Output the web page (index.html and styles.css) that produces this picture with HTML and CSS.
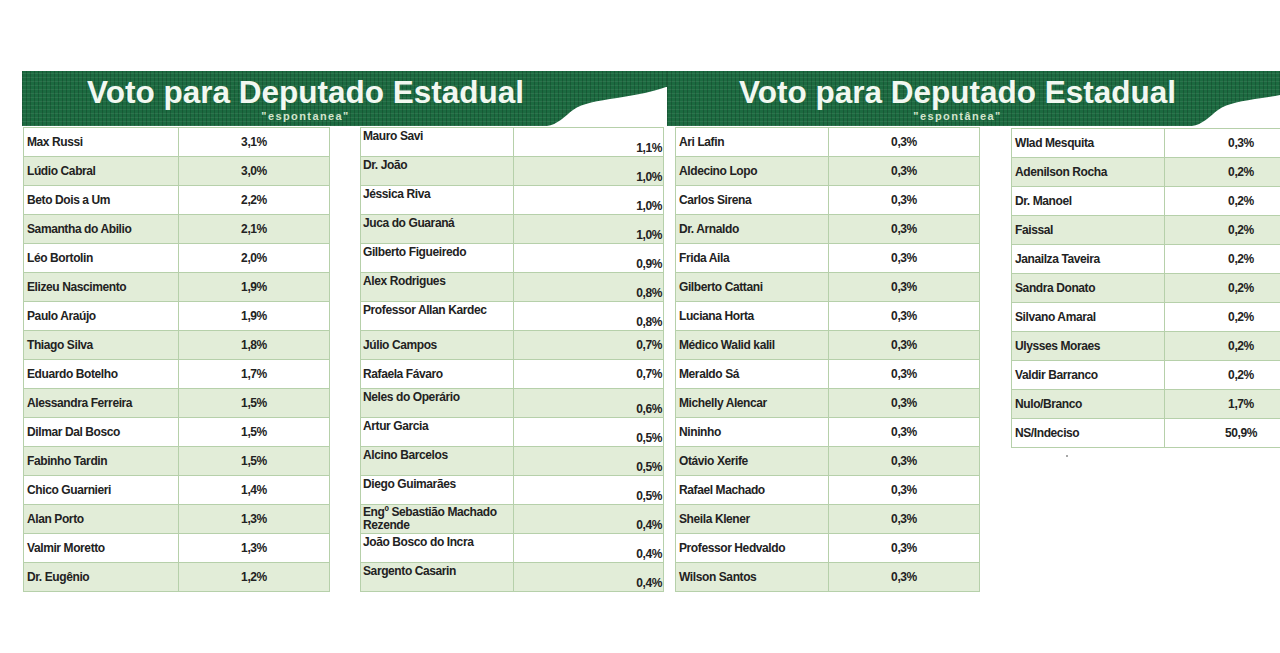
FILE: index.html
```html
<!DOCTYPE html>
<html lang="pt-BR">
<head>
<meta charset="utf-8">
<title>Voto para Deputado Estadual</title>
<link rel="stylesheet" href="styles.css">
</head>
<body>
<div class="page">
  <div class="banners">
    <div class="banner b1">
      <div class="title-block">
        <h1 class="title">Voto para Deputado Estadual</h1>
        <p class="sub">"espontanea"</p>
      </div>
      <svg class="cut" viewBox="0 0 120 40" preserveAspectRatio="none"><path d="M0 40 C10 39 18 30 26 24 C36 17 50 15 70 12 C90 9 108 5 119 1 L120 1 L120 40 Z" fill="#fff"/></svg>
    </div>
    <div class="banner b2">
      <div class="title-block">
        <h1 class="title">Voto para Deputado Estadual</h1>
        <p class="sub">"espontânea"</p>
      </div>
      <svg class="cut" viewBox="0 0 120 40" preserveAspectRatio="none"><path d="M0 40 C10 39 18 30 26 24 C36 17 50 15 70 12 C90 9 108 5 119 1 L120 1 L120 40 Z" fill="#fff"/></svg>
    </div>
  </div>

  <div class="tables">
    <table class="t t1">
      <colgroup><col class="c-name"><col></colgroup>
      <tr><td class="n">Max Russi</td><td class="v">3,1%</td></tr>
      <tr><td class="n">Lúdio Cabral</td><td class="v">3,0%</td></tr>
      <tr><td class="n">Beto Dois a Um</td><td class="v">2,2%</td></tr>
      <tr><td class="n">Samantha do Abilio</td><td class="v">2,1%</td></tr>
      <tr><td class="n">Léo Bortolin</td><td class="v">2,0%</td></tr>
      <tr><td class="n">Elizeu Nascimento</td><td class="v">1,9%</td></tr>
      <tr><td class="n">Paulo Araújo</td><td class="v">1,9%</td></tr>
      <tr><td class="n">Thiago Silva</td><td class="v">1,8%</td></tr>
      <tr><td class="n">Eduardo Botelho</td><td class="v">1,7%</td></tr>
      <tr><td class="n">Alessandra Ferreira</td><td class="v">1,5%</td></tr>
      <tr><td class="n">Dilmar Dal Bosco</td><td class="v">1,5%</td></tr>
      <tr><td class="n">Fabinho Tardin</td><td class="v">1,5%</td></tr>
      <tr><td class="n">Chico Guarnieri</td><td class="v">1,4%</td></tr>
      <tr><td class="n">Alan Porto</td><td class="v">1,3%</td></tr>
      <tr><td class="n">Valmir Moretto</td><td class="v">1,3%</td></tr>
      <tr><td class="n">Dr. Eugênio</td><td class="v">1,2%</td></tr>
    </table>

    <table class="t t2">
      <colgroup><col class="c-name"><col></colgroup>
      <tr><td class="n">Mauro Savi</td><td class="v">1,1%</td></tr>
      <tr><td class="n">Dr. João</td><td class="v">1,0%</td></tr>
      <tr><td class="n">Jéssica Riva</td><td class="v">1,0%</td></tr>
      <tr><td class="n">Juca do Guaraná</td><td class="v">1,0%</td></tr>
      <tr><td class="n">Gilberto Figueiredo</td><td class="v">0,9%</td></tr>
      <tr><td class="n">Alex Rodrigues</td><td class="v">0,8%</td></tr>
      <tr><td class="n">Professor Allan Kardec</td><td class="v">0,8%</td></tr>
      <tr class="mid"><td class="n">Júlio Campos</td><td class="v">0,7%</td></tr>
      <tr class="mid"><td class="n">Rafaela Fávaro</td><td class="v">0,7%</td></tr>
      <tr><td class="n">Neles do Operário</td><td class="v">0,6%</td></tr>
      <tr><td class="n">Artur Garcia</td><td class="v">0,5%</td></tr>
      <tr><td class="n">Alcino Barcelos</td><td class="v">0,5%</td></tr>
      <tr><td class="n">Diego Guimarães</td><td class="v">0,5%</td></tr>
      <tr><td class="n two">Engº Sebastião Machado<br>Rezende</td><td class="v">0,4%</td></tr>
      <tr><td class="n">João Bosco do Incra</td><td class="v">0,4%</td></tr>
      <tr><td class="n">Sargento Casarin</td><td class="v">0,4%</td></tr>
    </table>

    <table class="t t3">
      <colgroup><col class="c-name"><col></colgroup>
      <tr><td class="n">Ari Lafin</td><td class="v">0,3%</td></tr>
      <tr><td class="n">Aldecino Lopo</td><td class="v">0,3%</td></tr>
      <tr><td class="n">Carlos Sirena</td><td class="v">0,3%</td></tr>
      <tr><td class="n">Dr. Arnaldo</td><td class="v">0,3%</td></tr>
      <tr><td class="n">Frida Aila</td><td class="v">0,3%</td></tr>
      <tr><td class="n">Gilberto Cattani</td><td class="v">0,3%</td></tr>
      <tr><td class="n">Luciana Horta</td><td class="v">0,3%</td></tr>
      <tr><td class="n">Médico Walid kalil</td><td class="v">0,3%</td></tr>
      <tr><td class="n">Meraldo Sá</td><td class="v">0,3%</td></tr>
      <tr><td class="n">Michelly Alencar</td><td class="v">0,3%</td></tr>
      <tr><td class="n">Nininho</td><td class="v">0,3%</td></tr>
      <tr><td class="n">Otávio Xerife</td><td class="v">0,3%</td></tr>
      <tr><td class="n">Rafael Machado</td><td class="v">0,3%</td></tr>
      <tr><td class="n">Sheila Klener</td><td class="v">0,3%</td></tr>
      <tr><td class="n">Professor Hedvaldo</td><td class="v">0,3%</td></tr>
      <tr><td class="n">Wilson Santos</td><td class="v">0,3%</td></tr>
    </table>

    <div class="col4">
      <table class="t t4">
        <colgroup><col class="c-name"><col></colgroup>
        <tr><td class="n">Wlad Mesquita</td><td class="v">0,3%</td></tr>
        <tr><td class="n">Adenilson Rocha</td><td class="v">0,2%</td></tr>
        <tr><td class="n">Dr. Manoel</td><td class="v">0,2%</td></tr>
        <tr><td class="n">Faissal</td><td class="v">0,2%</td></tr>
        <tr><td class="n">Janailza Taveira</td><td class="v">0,2%</td></tr>
        <tr><td class="n">Sandra Donato</td><td class="v">0,2%</td></tr>
        <tr><td class="n">Silvano Amaral</td><td class="v">0,2%</td></tr>
        <tr><td class="n">Ulysses Moraes</td><td class="v">0,2%</td></tr>
        <tr><td class="n">Valdir Barranco</td><td class="v">0,2%</td></tr>
        <tr><td class="n">Nulo/Branco</td><td class="v">1,7%</td></tr>
        <tr><td class="n">NS/Indeciso</td><td class="v">50,9%</td></tr>
      </table>
      <div class="dot"></div>
    </div>
  </div>
</div>
</body>
</html>
```

FILE: styles.css
```css
html, body {
  margin: 0;
  padding: 0;
  background: #ffffff;
  overflow: hidden;
}
body {
  width: 1280px;
  height: 653px;
  font-family: "Liberation Sans", Arial, sans-serif;
}
.page {
  padding: 71px 0 0 22px;
}
.banners {
  display: flex;
}
.banner {
  position: relative;
  flex: 0 0 645px;
  height: 55px;
  overflow: hidden;
  background-color: #1c6a40;
  background-image:
    repeating-linear-gradient(90deg, rgba(0, 0, 0, 0.17) 0 1px, transparent 1px 4px),
    repeating-linear-gradient(0deg, rgba(255, 255, 255, 0.07) 0 1px, transparent 1px 4px);
}
.title-block {
  display: inline-flex;
  flex-direction: column;
  align-items: center;
  margin-top: 5px;
}
.b1 .title-block {
  margin-left: 65px;
}
.b2 .title-block {
  margin-left: 72px;
}
.title {
  margin: 0;
  font-size: 31.5px;
  line-height: 33px;
  font-weight: 700;
  color: #f2f8f1;
  white-space: nowrap;
}
.sub {
  margin: 1px 0 0;
  font-size: 11px;
  line-height: 12px;
  font-weight: 700;
  letter-spacing: 1.4px;
  color: #d3e5cd;
}
.cut {
  position: absolute;
  right: 0;
  bottom: 0;
  width: 120px;
  height: 40px;
}

.tables {
  display: flex;
  align-items: flex-start;
  margin: 1px 0 0 1px;
}
.t, .col4 {
  flex: 0 0 auto;
}
.t {
  border-collapse: collapse;
  table-layout: fixed;
  font-size: 12px;
  font-weight: 700;
  letter-spacing: -0.4px;
  color: #222;
}
.t tr {
  height: 29px;
}
.t td {
  border: 1px solid #b6d0aa;
  padding: 0 3px;
  line-height: 13px;
  vertical-align: middle;
  white-space: nowrap;
  overflow: hidden;
}
.t tr:nth-child(even) td {
  background: #e2edd8;
}
.t .v {
  text-align: center;
}
.c-name {
  width: 155px;
}

.t1 {
  width: 307px;
}
.t2 {
  width: 304px;
  margin-left: 30px;
}
.t2 .c-name {
  width: 153px;
}
.t2 td.n {
  vertical-align: top;
  padding: 2px 2px 0;
}
.t2 td.v {
  text-align: right;
  vertical-align: bottom;
  padding: 0 1px 1px 0;
}
.t2 tr.mid td {
  vertical-align: middle;
  padding-top: 0;
  padding-bottom: 0;
}
.t2 td.two {
  padding-top: 1px;
}
.t3 {
  width: 305px;
  margin-left: 11px;
}
.t3 .c-name {
  width: 153px;
}
.col4 {
  margin: 1px 0 0 31px;
}
.t4 {
  width: 307px;
}
.t4 .c-name {
  width: 153px;
}
.dot {
  width: 2px;
  height: 2px;
  border-radius: 50%;
  background: #8a8a8a;
  margin: 7px 0 0 55px;
}
```
